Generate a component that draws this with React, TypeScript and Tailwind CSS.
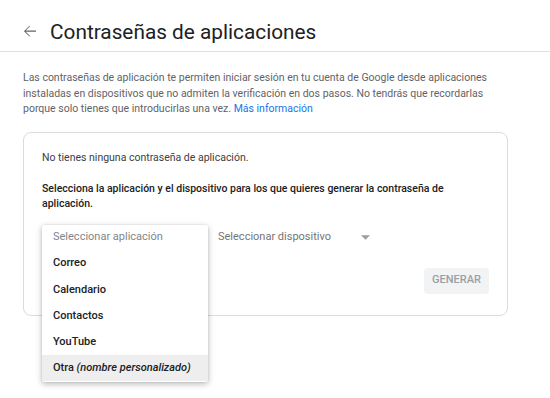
import { useState } from 'react';

const apps = ['Correo', 'Calendario', 'Contactos', 'YouTube'];

export default function App() {
  const [hovered, setHovered] = useState<string | null>('otra');

  return (
    <div className="min-h-screen w-full bg-white font-['Roboto',sans-serif] text-[#3c4043]">
      {/* cabecera */}
      <div className="h-[52px] border-b border-[#e0e0e0] flex items-start pt-[18px] pl-[21px]">
        <button className="w-[18px] h-[18px] mt-[4px] text-[#5f6368]">
          <svg viewBox="0 0 24 24" width="18" height="18" fill="currentColor">
            <path d="M20 11.4H6.4l5.6-5.6-.8-.8L4 12.2l7.2 7.2.8-.8-5.6-5.6H20z" />
          </svg>
        </button>
        <h1 className="ml-[11px] text-[20.8px] leading-[28px] text-[#202124]">Contraseñas de aplicaciones</h1>
      </div>

      <div className="px-[23px]">
        <p className="mt-[18px] text-[10.5px] leading-[15.5px] text-[#5f6368] max-w-[480px]">
          Las contraseñas de aplicación te permiten iniciar sesión en tu cuenta de Google desde aplicaciones instaladas en dispositivos que no admiten la verificación en dos pasos. No tendrás que recordarlas porque solo tienes que introducirlas una vez.{' '}
          <a className="text-[#1a73e8]">Más información</a>
        </p>

        {/* tarjeta */}
        <div className="mt-[15px] w-[485px] rounded-lg border border-[#dadce0] pt-[17px] pb-[21px] px-[18px]">
          <p className="text-[10.5px] leading-[16px]">No tienes ninguna contraseña de aplicación.</p>
          <p className="mt-[15px] text-[10.5px] leading-[15px] font-medium text-[#202124] pr-[20px]">
            Selecciona la aplicación y el dispositivo para los que quieres generar la contraseña de aplicación.
          </p>

          <div className="mt-[14px] flex items-center h-[26px]">
            <div className="relative w-[166px] h-[26px]">
              <div className="absolute left-0 top-0 z-10 w-[166px] pb-[1px] bg-white rounded-[2px] shadow-[0_2px_6px_rgba(0,0,0,0.28),0_0_2px_rgba(0,0,0,0.12)]">
                <div className="h-[26px] flex items-center px-[11px] text-[11px] text-[#80868b]">Seleccionar aplicación</div>
                {apps.map((a) => (
                  <div
                    key={a}
                    onMouseEnter={() => setHovered(a)}
                    className={`h-[26.2px] flex items-center px-[11px] text-[11px] font-medium text-[#202124] ${hovered === a ? 'bg-[#eeeeee]' : ''}`}
                  >
                    {a}
                  </div>
                ))}
                <div
                  onMouseEnter={() => setHovered('otra')}
                  className={`h-[26.2px] flex items-center px-[11px] text-[11px] font-medium text-[#202124] ${hovered === 'otra' ? 'bg-[#eeeeee]' : ''}`}
                >
                  Otra&nbsp;<span className="italic">(nombre personalizado)</span>
                </div>
              </div>
            </div>

            <div className="ml-[10px] flex items-center w-[160px]">
              <span className="text-[11px] text-[#757575]">Seleccionar dispositivo</span>
              <svg className="ml-[30px]" width="9" height="5" viewBox="0 0 10 5">
                <path d="M0 0l5 5 5-5z" fill="#9e9e9e" />
              </svg>
            </div>
          </div>

          <div className="mt-[17px] flex justify-end">
            <button className="h-[26px] w-[65px] rounded bg-[#f1f3f4] text-[11px] font-medium text-[#9aa0a6]">
              GENERAR
            </button>
          </div>
        </div>
      </div>
    </div>
  );
}
